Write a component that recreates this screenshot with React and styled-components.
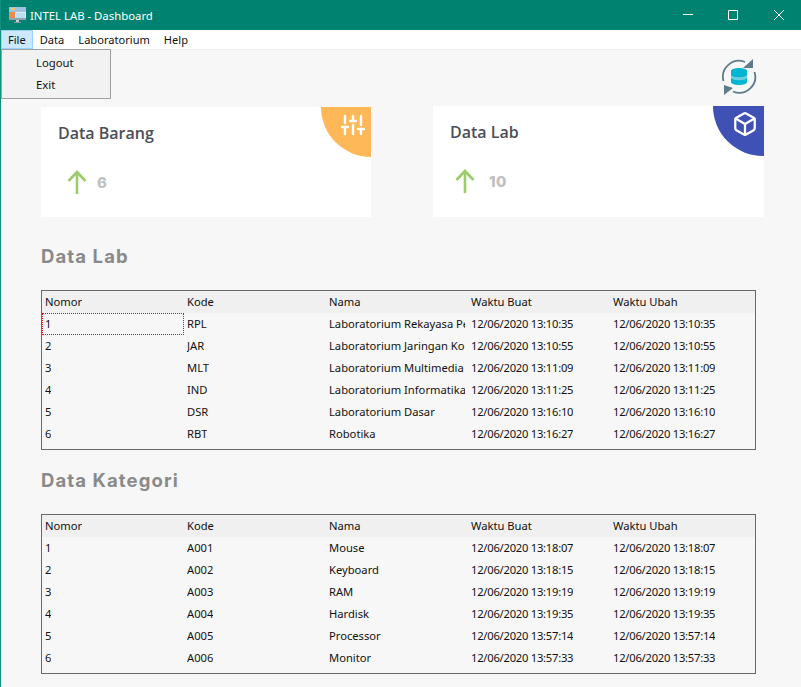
import React from 'react'
import styled, { createGlobalStyle } from 'styled-components'
import { FiBox, FiSliders } from 'react-icons/fi'

const GlobalStyle = createGlobalStyle`
  html, body {
    margin: 0;
    padding: 0;
    background: #f7f7f7;
  }
`
const Window = styled.div`
  position: relative;
  width: 801px;
  height: 687px;
  overflow: hidden;
  background: #f7f7f7;
  font-family: "Noto Sans", "Open Sans", sans-serif;
  font-size: 11.2px;
  color: #111;
  box-sizing: border-box;
  border-left: 1px solid #11917f;
`
const TitleBar = styled.div`
  height: 30px;
  margin: 0 -1px 0 -1px;
  background: #008270;
  color: #fff;
  display: flex;
  align-items: center;
`
const AppIcon = styled.svg`
  margin-left: 9px;
  margin-right: 4px;
`
const Title = styled.div`
  flex: 1;
  font-size: 11.35px;
`
const WinButton = styled.div`
  width: ${p => p.$width || 46}px;
  height: 30px;
  display: flex;
  align-items: center;
  justify-content: center;
`
const MenuBar = styled.div`
  height: 18px;
  padding-bottom: 1px;
  background: #fff;
  display: flex;
  border-bottom: 1px solid #f0f0f0;
`
const MenuItem = styled.div`
  height: 19px;
  box-sizing: border-box;
  padding: 0 6px;
  display: flex;
  align-items: center;
  font-size: 11.1px;
  background: ${p => (p.$active ? '#cce8ff' : 'transparent')};
  border: 1px solid ${p => (p.$active ? '#99d1ff' : 'transparent')};
`
const Dropdown = styled.div`
  position: absolute;
  top: 49px;
  left: 0;
  width: 110px;
  height: 50px;
  box-sizing: border-box;
  background: #f2f2f2;
  border: 1px solid #a0a0a0;
  padding-top: 1px;
  z-index: 5;
`
const DropdownItem = styled.div`
  height: 22px;
  padding-left: 34px;
  display: flex;
  align-items: center;
  font-size: 11.3px;
`
const Toolbar = styled.div`
  height: 57px;
  display: flex;
  justify-content: flex-end;
  padding: 8px 43px 0 0;
  box-sizing: border-box;
`
const Cards = styled.div`
  display: flex;
  align-items: flex-end;
  gap: 62px;
  height: 110px;
  padding-left: 40px;
`
const Card = styled.div`
  position: relative;
  width: ${p => p.$width}px;
  height: ${p => p.$height}px;
  background: #fff;
  overflow: hidden;
`
const CardCircle = styled.div`
  position: absolute;
  top: -50px;
  right: ${p => p.$right}px;
  width: 100px;
  height: 100px;
  border-radius: 50%;
  background: ${p => p.$color};
`
const CardIcon = styled.div`
  position: absolute;
  top: ${p => p.$top}px;
  right: ${p => p.$right}px;
  display: flex;
  color: #fff;
`
const CardTitle = styled.div`
  padding: 14px 0 0 17px;
  height: 24px;
  font-family: "Open Sans", sans-serif;
  font-size: 16px;
  font-weight: 600;
  line-height: 24px;
  color: #4b4f56;
`
const CardValue = styled.div`
  display: flex;
  align-items: center;
  gap: ${p => p.$gap}px;
  padding: 25px 0 0 ${p => p.$left}px;
`
const ValueText = styled.span`
  padding-bottom: 1px;
  font-family: Inter, sans-serif;
  font-size: 15px;
  font-weight: 800;
  letter-spacing: 0.5px;
  color: #c0c0c0;
`
const SectionTitle = styled.h2`
  margin: ${p => p.$top}px 0 0 40px;
  height: 26px;
  font-family: Inter, sans-serif;
  font-size: 18.5px;
  font-weight: 700;
  letter-spacing: 1.1px;
  line-height: 24px;
  color: #8a8a8a;
`
const Table = styled.div`
  margin: ${p => p.$top}px 0 0 40px;
  width: 715px;
  height: 160px;
  box-sizing: border-box;
  border: 1px solid #696969;
`
const HeaderRow = styled.div`
  display: flex;
  height: 22px;
  background: #f0f0f0;
`
const Row = styled.div`
  display: flex;
  height: 22px;
`
const Cell = styled.div`
  width: 142px;
  height: 22px;
  padding: 0 3px 2px;
  box-sizing: border-box;
  display: flex;
  align-items: center;
  outline: ${p => (p.$focused ? '1px dotted #d81010' : 'none')};
  outline-offset: -1px;
`
const CellText = styled.span`
  overflow: hidden;
  white-space: nowrap;
  letter-spacing: ${p => (p.$tight ? '-0.24px' : '0')};
`

const columns = ['Nomor', 'Kode', 'Nama', 'Waktu Buat', 'Waktu Ubah']

const labRows = [
  ['1', 'RPL', 'Laboratorium Rekayasa Perangkat Lunak', '12/06/2020 13:10:35', '12/06/2020 13:10:35'],
  ['2', 'JAR', 'Laboratorium Jaringan Komputer', '12/06/2020 13:10:55', '12/06/2020 13:10:55'],
  ['3', 'MLT', 'Laboratorium Multimedia', '12/06/2020 13:11:09', '12/06/2020 13:11:09'],
  ['4', 'IND', 'Laboratorium Informatika', '12/06/2020 13:11:25', '12/06/2020 13:11:25'],
  ['5', 'DSR', 'Laboratorium Dasar', '12/06/2020 13:16:10', '12/06/2020 13:16:10'],
  ['6', 'RBT', 'Robotika', '12/06/2020 13:16:27', '12/06/2020 13:16:27'],
]

const kategoriRows = [
  ['1', 'A001', 'Mouse', '12/06/2020 13:18:07', '12/06/2020 13:18:07'],
  ['2', 'A002', 'Keyboard', '12/06/2020 13:18:15', '12/06/2020 13:18:15'],
  ['3', 'A003', 'RAM', '12/06/2020 13:19:19', '12/06/2020 13:19:19'],
  ['4', 'A004', 'Hardisk', '12/06/2020 13:19:35', '12/06/2020 13:19:35'],
  ['5', 'A005', 'Processor', '12/06/2020 13:57:14', '12/06/2020 13:57:14'],
  ['6', 'A006', 'Monitor', '12/06/2020 13:57:33', '12/06/2020 13:57:33'],
]

const ArrowUp = () => (
  <svg width="20" height="25" viewBox="0 0 20 25" fill="none" stroke="#9ccc6c" strokeWidth="2.6">
    <path d="M10 24V2M1.5 11L10 2l8.500 9" />
  </svg>
)

const SyncIcon = () => (
  <svg width="38" height="38" viewBox="0 0 38 38" fill="none">
    <path d="M3.500 23A16 16 0 0 1 25 4" stroke="#5f7c8a" strokeWidth="1.800" />
    <path d="M34.500 14A16 16 0 0 1 13 33.500" stroke="#5f7c8a" strokeWidth="1.800" />
    <path d="M33 1v9h-10z" fill="#5f7c8a" />
    <path d="M4 37v-10l9 3z" fill="#5f7c8a" />
    <path d="M11 13C11 9 27 9 27 13V24C27 28 11 28 11 24z" fill="#00b4d4" />
    <path d="M11 17C13 20 25 20 27 17V20C25 23 13 23 11 20z" fill="#68cfe0" />
  </svg>
)

const DataTable = ({ rows, top, focusFirst }) => (
  <Table $top={top}>
    <HeaderRow>
      {columns.map(c => <Cell key={c}><CellText>{c}</CellText></Cell>)}
    </HeaderRow>
    {rows.map((row, i) => (
      <Row key={row[0]}>
        {row.map((v, j) => (
          <Cell key={j} $focused={focusFirst && i === 0 && j === 0}>
            <CellText $tight={j >= 3}>{v}</CellText>
          </Cell>
        ))}
      </Row>
    ))}
  </Table>
)

const App = () => {
  return (
    <Window>
      <GlobalStyle />
      <TitleBar>
        <AppIcon width="17" height="16" viewBox="0 0 17 16">
          <rect x="0" y="0" width="17" height="13" fill="#e4eef6" />
          <rect x="0" y="0" width="17" height="5" fill="#9fc3de" />
          <rect x="2" y="1" width="4" height="2" fill="#f6c667" />
          <rect x="0" y="5" width="6" height="6" fill="#f28a4b" />
          <rect x="7" y="6" width="9" height="5" fill="#bcdcf2" />
          <rect x="0" y="11" width="17" height="2" fill="#8fa3b0" />
          <rect x="7" y="13" width="3" height="2" fill="#c5ccd2" />
          <rect x="5" y="15" width="7" height="1" fill="#8b97a1" />
        </AppIcon>
        <Title>INTEL LAB - Dashboard</Title>
        <WinButton $width={44}>
          <svg width="10" height="10" viewBox="0 0 10 10" stroke="#fff"><path d="M0 4.500H10" /></svg>
        </WinButton>
        <WinButton>
          <svg width="10" height="10" viewBox="0 0 10 10" stroke="#fff" fill="none"><path d="M.5 .5H9.500V9.500H.5z" /></svg>
        </WinButton>
        <WinButton>
          <svg width="10" height="10" viewBox="0 0 10 10" stroke="#fff" fill="none"><path d="M0 0L10 10M10 0L0 10" /></svg>
        </WinButton>
      </TitleBar>
      <MenuBar>
        <MenuItem $active>File</MenuItem>
        <MenuItem>Data</MenuItem>
        <MenuItem>Laboratorium</MenuItem>
        <MenuItem>Help</MenuItem>
      </MenuBar>
      <Dropdown>
        <DropdownItem>Logout</DropdownItem>
        <DropdownItem>Exit</DropdownItem>
      </Dropdown>
      <Toolbar><SyncIcon /></Toolbar>
      <Cards>
        <Card $width={330} $height={110}>
          <CardCircle $color="#ffb858" $right={-50} />
          <CardIcon $top={6} $right={6}><FiSliders size={24} strokeWidth={2.400} /></CardIcon>
          <CardTitle>Data Barang</CardTitle>
          <CardValue $left={26} $gap={10}><ArrowUp /><ValueText>6</ValueText></CardValue>
        </Card>
        <Card $width={331} $height={111}>
          <CardCircle $color="#3f51b5" $right={-49} />
          <CardIcon $top={5} $right={6}><FiBox size={26} strokeWidth={2.100} /></CardIcon>
          <CardTitle>Data Lab</CardTitle>
          <CardValue $left={22} $gap={14}><ArrowUp /><ValueText>10</ValueText></CardValue>
        </Card>
      </Cards>
      <SectionTitle $top={27}>Data Lab</SectionTitle>
      <DataTable rows={labRows} top={20} focusFirst />
      <SectionTitle $top={18}>Data Kategori</SectionTitle>
      <DataTable rows={kategoriRows} top={20} />
    </Window>
  )
}

export default App
